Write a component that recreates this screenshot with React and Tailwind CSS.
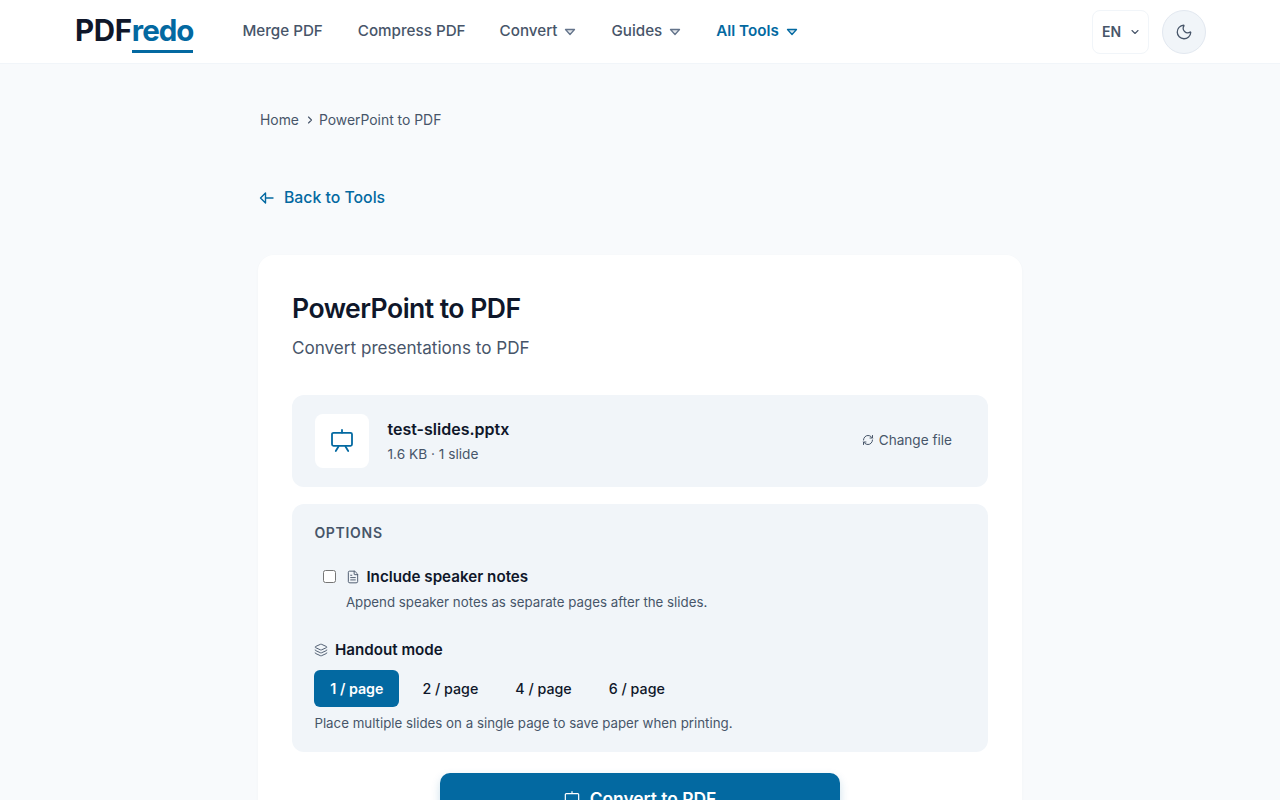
import React from "react";
import { ChevronDown, ChevronRight, FileText, Layers, Moon, RefreshCw } from "lucide-react";

const Caret = ({ className }) => (
  <svg viewBox="0 0 12 8" className={`w-[12px] h-[8px] ${className}`} fill="none" stroke="currentColor" strokeWidth="1.3" strokeLinejoin="round">
    <path d="M1.5 1.5h9L6 6.5z" fill="currentColor" fillOpacity="0.18" />
  </svg>
);

const BoardIcon = ({ className }) => (
  <svg viewBox="0 0 24 24" className={className} fill="none" stroke="currentColor" strokeWidth="1.8" strokeLinecap="round" strokeLinejoin="round">
    <path d="M12 1v2.7" />
    <rect x="2" y="3.8" width="20" height="13" rx="1.5" />
    <path d="M8.5 17.5L5.8 22M15.5 17.5L18.2 22" />
  </svg>
);

const navItems = [
  { label: "Convert", gap: "ml-[34px]" },
  { label: "Guides", gap: "ml-[35px]" },
];

const App = () => {
  return (
    <div className="h-screen overflow-hidden bg-[#f8fafc] font-['Inter',sans-serif] text-[#0f172a]">
      {/* header */}
      <header className="h-[64px] bg-white border-b border-[#f1f5f9] flex items-center pl-[75px] pr-[74px]">
        <a className="relative mb-[2px] text-[29.5px] font-bold tracking-[-0.3px] leading-none">
          PDF<span className="relative text-[#0369a1] tracking-[-1px]">redo<span className="absolute left-0 right-0 -bottom-[5px] h-[3px] bg-[#0369a1]"></span></span>
        </a>
        <nav className="flex items-center ml-[49px] text-[15.2px] text-[#475569] font-medium">
          <span>Merge PDF</span>
          <span className="ml-[35px]">Compress PDF</span>
          {navItems.map((item) => (
            <span key={item.label} className={`flex items-center ${item.gap}`}>
              {item.label}
              <Caret className="ml-[7px] mt-[2px] text-[#64748b]" />
            </span>
          ))}
          <span className="flex items-center ml-[35px] text-[#0369a1] font-semibold">
            All Tools
            <Caret className="ml-[7px] mt-[2px]" />
          </span>
        </nav>
        <div className="ml-auto flex items-center gap-[13px]">
          <button className="h-[44px] w-[57px] rounded-[8px] border border-[#f1f5f9] bg-white flex items-center pl-[9px] text-[14px] font-semibold text-[#475569]">
            EN
            <ChevronDown className="w-[12px] h-[12px] ml-[8px]" strokeWidth={2.2} />
          </button>
          <button className="w-[44px] h-[44px] rounded-full bg-[#f1f5f9] border border-[#e2e8f0] flex items-center justify-center text-[#475569]">
            <Moon className="w-[18px] h-[18px]" strokeWidth={1.7} />
          </button>
        </div>
      </header>

      <main className="w-[764px] mx-auto">
        {/* breadcrumb */}
        <div className="flex items-center pl-[2px] pt-[47px] text-[13.9px] leading-[18px] text-[#475569]">
          <span>Home</span>
          <ChevronRight className="w-[12px] h-[12px] ml-[5px] mr-[3px]" strokeWidth={2.2} />
          <span>PowerPoint to PDF</span>
        </div>

        <a className="flex items-center mt-[59px] text-[#0369a1] text-[15.8px] font-medium leading-[20px]">
          <svg viewBox="0 0 16 16" className="w-[16px] h-[16px] ml-px" fill="none" stroke="currentColor" strokeWidth="1.4" strokeLinejoin="round" strokeLinecap="round">
            <path d="M6.5 3L1.5 8l5 5zM6.5 8H14" />
          </svg>
          <span className="ml-[9px]">Back to Tools</span>
        </a>

        {/* card */}
        <section className="mt-[47px] bg-white rounded-[16px] shadow-[0_1px_3px_rgba(15,23,42,0.03)] px-[34px] pt-[34px] pb-[40px]">
          <h1 className="text-[26.6px] leading-[38px] font-semibold tracking-[-0.55px]">PowerPoint to PDF</h1>
          <p className="mt-[10px] text-[17.1px] leading-[22px] text-[#475569]">Convert presentations to PDF</p>

          <div className="mt-[36px] h-[92px] rounded-[12px] bg-[#f1f5f9] flex items-center pl-[23px] pr-[36px]">
            <div className="w-[54px] h-[54px] rounded-[8px] bg-white flex items-center justify-center text-[#0369a1]">
              <BoardIcon className="w-[24px] h-[24px]" />
            </div>
            <div className="ml-[18.5px]">
              <div className="text-[16px] leading-[24px] font-semibold">test-slides.pptx</div>
              <div className="text-[13.7px] leading-[22px] mt-[2px] text-[#475569]">1.6 KB · 1 slide</div>
            </div>
            <button className="ml-auto mb-[1px] flex items-center text-[13.6px] text-[#475569]">
              <RefreshCw className="w-[12px] h-[12px] mr-[5px]" />
              Change file
            </button>
          </div>

          <div className="mt-[17px] h-[248px] rounded-[12px] bg-[#f1f5f9] px-[22.4px] pt-[19px]">
            <div className="text-[14px] leading-[20px] font-semibold tracking-[0.7px] text-[#475569]">OPTIONS</div>

            <div className="mt-[24px] pl-[9px] flex items-center h-[20px]">
              <span className="w-[13px] h-[13px] mb-[1px] rounded-[2.5px] border border-[#767676] bg-white"></span>
              <FileText className="w-[14px] h-[14px] ml-[10px] text-[#475569]" strokeWidth={1.6} />
              <span className="ml-[6px] text-[15.2px] font-semibold">Include speaker notes</span>
            </div>
            <p className="mt-[4px] ml-[31.5px] text-[13.3px] leading-[22px] text-[#475569]">Append speaker notes as separate pages after the slides.</p>

            <div className="mt-[27px] flex items-center h-[20px]">
              <Layers className="w-[14px] h-[14px] text-[#475569]" strokeWidth={1.6} />
              <span className="ml-[6.5px] text-[15.2px] font-semibold">Handout mode</span>
            </div>

            <div className="mt-[10px] flex items-center text-[14.25px] font-medium">
              <button className="h-[37px] w-[85px] rounded-[6px] bg-[#0369a1] text-white font-semibold">1 / page</button>
              <button className="h-[37px] ml-[23px]">2 / page</button>
              <button className="h-[37px] ml-[37px]">4 / page</button>
              <button className="h-[37px] ml-[37px]">6 / page</button>
            </div>
            <p className="mt-[6px] text-[13.3px] leading-[20px] text-[#475569]">Place multiple slides on a single page to save paper when printing.</p>
          </div>

          <button className="mt-[21px] mx-auto w-[400px] h-[52px] rounded-[10px] bg-[#0369a1] text-white text-[17.4px] font-semibold flex items-center justify-center shadow-[0_4px_10px_rgba(3,105,161,0.2)]">
            <BoardIcon className="w-[16px] h-[16px] mr-[10px]" />
            Convert to PDF
          </button>
        </section>
      </main>
    </div>
  );
};

export default App;
